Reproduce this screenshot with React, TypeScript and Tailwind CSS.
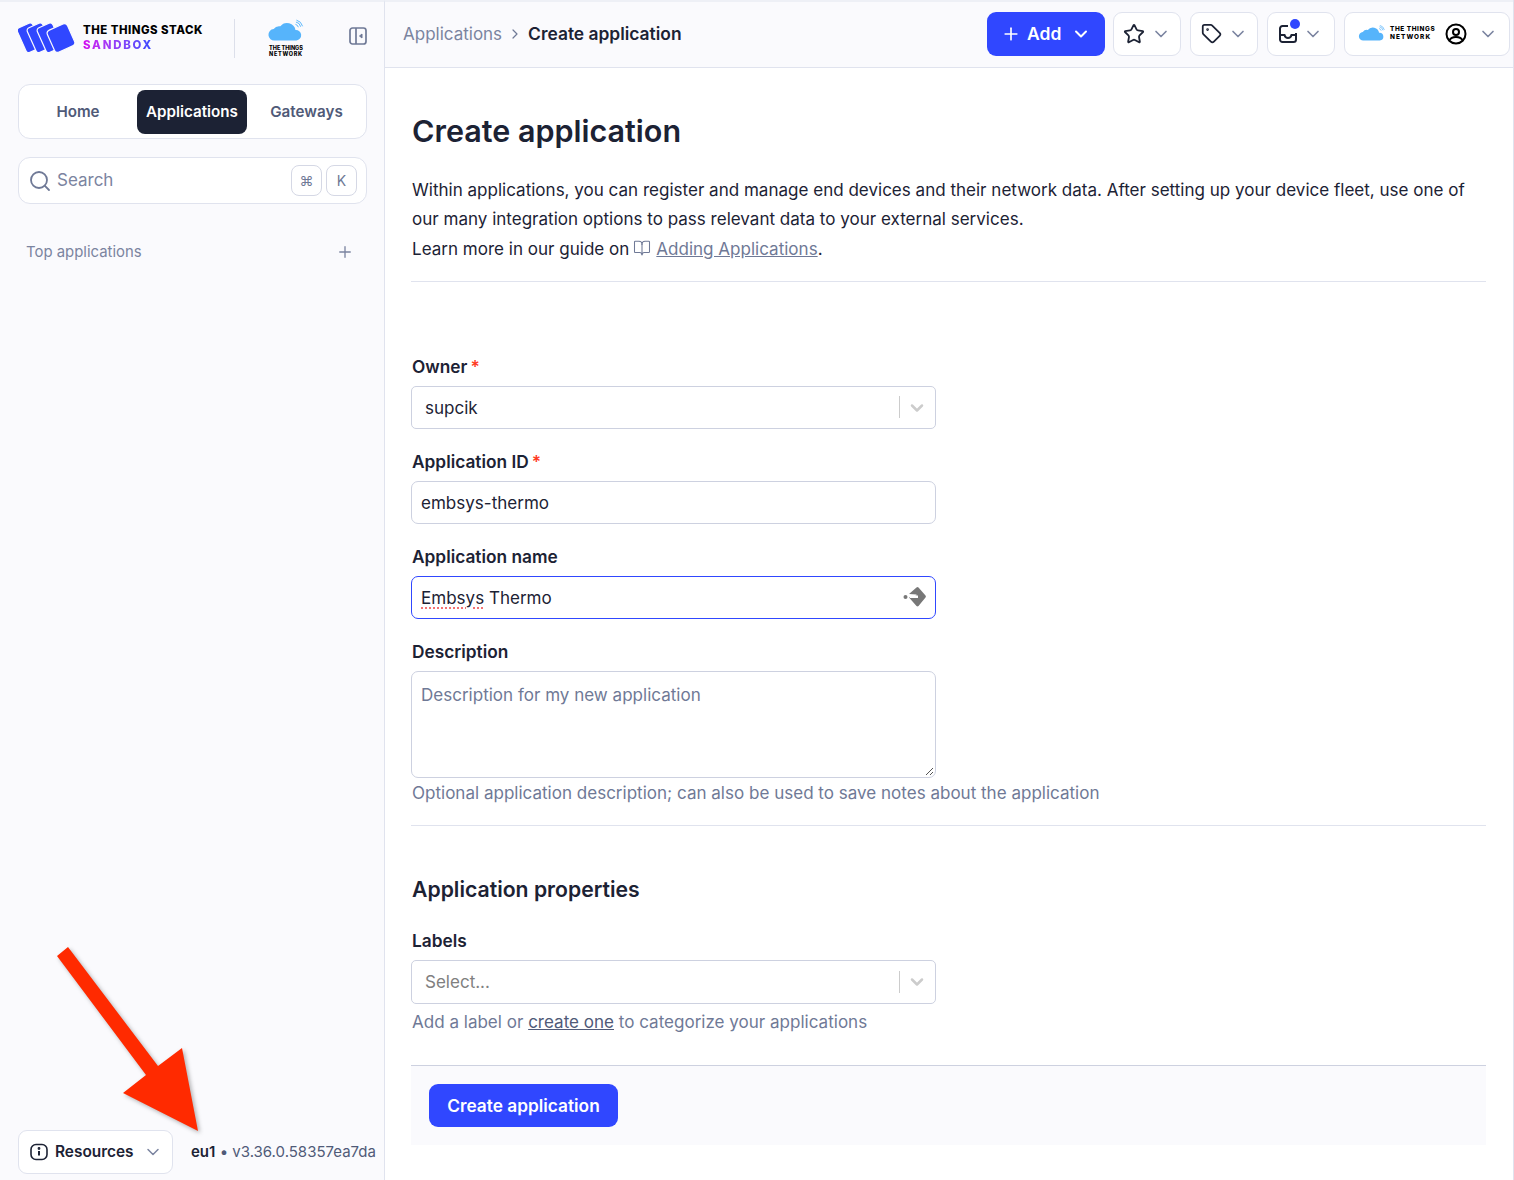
import { ChevronDown, ChevronRight, Plus, Search, Star, Tag, BookOpen } from 'lucide-react';

function StackLogo() {
  return (
    <svg width="58" height="30" viewBox="0 0 58 30">
      <g fill="#3047ff" stroke="#fafafd" strokeWidth="1.2">
        <rect x="3" y="1.500" width="17" height="27" rx="3" transform="rotate(-24 11 15)" />
        <rect x="13" y="1.500" width="17" height="27" rx="3" transform="rotate(-24 21 15)" />
        <rect x="23" y="1.500" width="17" height="27" rx="3" transform="rotate(-24 31 15)" />
        <rect x="32" y="3" width="22" height="24" rx="3.500" transform="rotate(-24 43 15)" />
      </g>
    </svg>
  );
}

function Cloud({ width = 36, height = 24 }: { width?: number; height?: number }) {
  return (
    <svg width={width} height={height} viewBox="0 0 38 24">
      <path d="M7 22a6 6 0 0 1-1-12 7 7 0 0 1 7-3 9 9 0 0 1 16 4 5.500 5.500 0 0 1 1 11z" fill="#56b4fb" />
      <g fill="none" stroke="#56b4fb" strokeWidth="1">
        <path d="M29 5a4 4 0 0 1 3 3" />
        <path d="M29.500 2.500a6.500 6.500 0 0 1 5 5" />
        <path d="M30 0.500a9 9 0 0 1 6.500 6.500" />
      </g>
    </svg>
  );
}

function TtnMark() {
  return (
    <div className="flex flex-col items-center w-[38px]">
      <Cloud />
      <div className="font-extrabold text-[5.500px] leading-[6px] whitespace-nowrap text-center text-black mt-[2px]">
        THE THINGS
        <br />
        <span className="tracking-[0.7px]">NETWORK</span>
      </div>
    </div>
  );
}

function SelectField({ value, placeholder, tall }: { value?: string; placeholder?: string; tall?: boolean }) {
  return (
    <div className={`${tall ? 'h-[44px]' : 'h-[43px]'} w-[525px] bg-white border border-[#cdd1e0] rounded-[5px] flex items-center pl-[13px]`}>
      <span className={value ? 'pt-[2px] text-[#1c2234]' : 'text-[#808080]'}>{value ?? placeholder}</span>
      <div className="ml-auto flex items-center">
        <div className="w-px h-[22px] bg-[#cccccc]" />
        <ChevronDown size={20} strokeWidth={3} className="text-[#cccccc] ml-[7px] mr-[8px] mt-[1px]" />
      </div>
    </div>
  );
}

function Label({ text, required }: { text: string; required?: boolean }) {
  return (
    <div className="h-[19px] flex items-center font-semibold text-[17.300px] text-[#1c2234] pl-[1px] mb-[10px] leading-[19px]">
      {text}
      {required && <span className="text-[#ff3b1f] ml-[3px]">*</span>}
    </div>
  );
}

function IconButton({ children, width }: { children: React.ReactNode; width: string }) {
  return (
    <div className={`h-[44px] ${width} bg-white border border-[#e0e3ee] rounded-[9px] flex items-center justify-center gap-[6px]`}>
      {children}
      <ChevronDown size={20} strokeWidth={2} className="text-[#7b84a0]" />
    </div>
  );
}

export default function App() {
  return (
    <div className="relative h-screen overflow-hidden bg-white flex font-['Inter',sans-serif] text-[17.040px] text-[#1c2234]">
      {/* SIDEBAR */}
      <aside className="w-[385px] shrink-0 bg-[#fafafd] border-r border-[#e0e3ee] border-t-2 border-t-[#eef0f6] flex flex-col pl-[18px] pr-[17px]">
        <div className="h-[82px] shrink-0 flex items-center">
          <div className="flex items-center h-[40px] -mt-[10px] w-full">
            <StackLogo />
            <div className="ml-[7px] font-extrabold text-[11.400px] leading-[15px] tracking-[0.5px] w-[132px]">
              <div className="text-black whitespace-nowrap">THE THINGS STACK</div>
              <div className="bg-gradient-to-r from-[#d400f0] to-[#3047ff] bg-clip-text text-transparent w-fit tracking-[1.800px]">SANDBOX</div>
            </div>
            <div className="w-px h-[39px] bg-[#dcdfea] ml-[19px]" />
            <div className="ml-[32px]"><TtnMark /></div>
            <svg width="18" height="18" viewBox="0 0 18 18" className="ml-auto mt-[-4px]" fill="none" stroke="#6f7996" strokeWidth="1.700">
              <rect x="1" y="1" width="16" height="16" rx="2.500" />
              <path d="M7 1v16" />
              <path d="M13 7l-2.500 2 2.500 2z" fill="#6f7996" strokeWidth="1" />
            </svg>
          </div>
        </div>

        <nav className="h-[55px] shrink-0 bg-white border border-[#e0e3ee] rounded-[12px] flex items-center px-[5px] font-semibold text-[15.200px] text-[#505a78]">
          <div className="w-[113px] text-center pr-[5px] pt-[1px]">Home</div>
          <div className="w-[110px] h-[44px] bg-[#1c2234] text-white rounded-[8px] flex items-center justify-center pt-[1px]">Applications</div>
          <div className="flex-1 text-center pl-[5px] pt-[1px]">Gateways</div>
        </nav>

        <div className="h-[47px] mt-[18px] shrink-0 bg-white border border-[#e0e3ee] rounded-[12px] flex items-center pl-[9px] pr-[9px]">
          <Search size={24} strokeWidth={1.800} className="text-[#6f7996]" />
          <span className="ml-[5px] text-[17px] text-[#7b84a0]">Search</span>
          <div className="ml-auto flex gap-[4px]">
            <div className="w-[31px] h-[31px] border border-[#d5d8e5] rounded-[8px] flex items-center justify-center text-[#6f7996] text-[14px]">⌘</div>
            <div className="w-[31px] h-[31px] border border-[#d5d8e5] rounded-[8px] flex items-center justify-center text-[#6f7996] text-[14px]">K</div>
          </div>
        </div>

        <div className="mt-[37px] pl-[8px] pr-[13px] flex items-center justify-between text-[14.900px] text-[#7b84a0]">
          <span>Top applications</span>
          <Plus size={18} strokeWidth={1.800} />
        </div>

        <div className="mt-auto mb-[6px] flex items-center">
          <div className="w-[155px] shrink-0 h-[44px] bg-white border border-[#e0e3ee] rounded-[9px] flex items-center pl-[11px] font-semibold text-[15.400px] text-[#1c2234]">
            <svg width="18" height="18" viewBox="0 0 18 18" fill="none" stroke="#1c2234" strokeWidth="1.600">
              <rect x="1" y="1.500" width="16" height="15" rx="5" />
              <path d="M9 8v4.500" strokeWidth="2" />
              <circle cx="9" cy="5.500" r="0.600" fill="#1c2234" />
            </svg>
            <span className="ml-[7px]">Resources</span>
            <ChevronDown size={20} strokeWidth={1.800} className="text-[#7b84a0] ml-[9px]" />
          </div>
          <div className="ml-[18px] text-[15px] whitespace-nowrap text-[#505a78]">
            <span className="font-semibold text-[#1c2234]">eu1</span> • v3.36.0.58357ea7da
          </div>
        </div>
      </aside>

      {/* MAIN */}
      <main className="flex-1 min-w-0 flex flex-col border-r border-[#e0e3ee]">
        <header className="h-[68px] shrink-0 bg-[#fafafd] border-b border-[#e0e3ee] border-t-2 border-t-[#eef0f6] flex items-center pl-[18px] pr-[3px] pb-[2px]">
          <span className="text-[#7b84a0] text-[17px] pt-[2px]">Applications</span>
          <ChevronRight size={16} strokeWidth={1.800} className="text-[#6f7996] mx-[5px]" />
          <span className="font-semibold text-[17.400px] pt-[2px]">Create application</span>
          <div className="ml-auto flex items-center gap-[9px]">
            <div className="h-[44px] w-[118px] mr-[-1px] bg-[#3047ff] rounded-[9px] text-white font-semibold text-[17.500px] flex items-center pl-[14px]">
              <Plus size={20} strokeWidth={2} />
              <span className="ml-[6px] pt-[2px]">Add</span>
              <ChevronDown size={20} strokeWidth={2.400} className="ml-[10px]" />
            </div>
            <IconButton width="w-[68px]"><Star size={22} strokeWidth={2} className="text-[#1c2234]" /></IconButton>
            <IconButton width="w-[68px]"><Tag size={21} strokeWidth={2} className="text-[#1c2234]" /></IconButton>
            <IconButton width="w-[68px]">
              <div className="relative">
                <svg width="18" height="20" viewBox="0 0 18 20" fill="none" stroke="#1c2234" strokeWidth="2">
                  <path d="M9 2H3.500A2.500 2.500 0 0 0 1 4.500v11A2.500 2.500 0 0 0 3.500 18h11a2.500 2.500 0 0 0 2.500-2.500V9" />
                  <path d="M1 11h4.500c.5 2 1.700 3 3.500 3s3-1 3.500-3H17" />
                </svg>
                <div className="absolute -top-[5px] right-[-3px] w-[10px] h-[10px] bg-[#3047ff] rounded-full" />
              </div>
            </IconButton>
            <div className="h-[44px] w-[166px] bg-white border border-[#e0e3ee] rounded-[9px] flex items-center pl-[13px]">
              <Cloud width={28} height={17} />
              <div className="ml-[4px] font-extrabold text-[6.400px] leading-[7.500px] tracking-[0.6px] whitespace-nowrap text-black">
                THE THINGS
                <br />
                <span className="tracking-[1.100px]">NETWORK</span>
              </div>
              <svg width="22" height="22" viewBox="0 0 22 22" fill="none" stroke="#000" strokeWidth="2" className="ml-[10px]">
                <circle cx="11" cy="11" r="9.500" />
                <circle cx="11" cy="9" r="3" />
                <path d="M4.500 17.500c1-2.500 3-3.500 6.500-3.500s5.500 1 6.500 3.500" />
              </svg>
              <ChevronDown size={20} strokeWidth={2} className="text-[#7b84a0] ml-auto mr-[11px]" />
            </div>
          </div>
        </header>

        <div className="pl-[26px] pr-[27px] flex-1 text-[#1c2234]">
          <h1 className="mt-[41px] pl-[1px] font-semibold text-[30.500px] leading-[44px]">Create application</h1>
          <div className="mt-[21.500px] pl-[1px] leading-[29.500px]">
            <p>Within applications, you can register and manage end devices and their network data. After setting up your device fleet, use one of our many integration options to pass relevant data to your external services.</p>
            <p className="flex items-center">
              Learn more in our guide on
              <BookOpen size={18} strokeWidth={1.400} className="text-[#6f7996] ml-[4px] mr-[5px]" />
              <span className="text-[#6f7996] underline">Adding Applications</span>
              <span>.</span>
            </p>
          </div>
          <div className="h-px bg-[#e0e3ee] mt-[17.500px]" />

          {/* FORMULAIRE */}
          <div className="mt-[75px]">
            <Label text="Owner" required />
            <SelectField value="supcik" />
          </div>
          <div className="mt-[23px]">
            <Label text="Application ID" required />
            <div className="h-[43px] w-[525px] bg-white border border-[#cdd1e0] rounded-[7px] flex items-center pl-[9px] pt-[2px]">embsys-thermo</div>
          </div>
          <div className="mt-[23px]">
            <Label text="Application name" />
            <div className="h-[43px] w-[525px] bg-white border border-[#3047ff] rounded-[7px] flex items-center pl-[9px] pr-[8px]">
              <span className="pt-[2px]"><span className="underline decoration-dotted decoration-[#ef4444] underline-offset-[3px]">Embsys</span> Thermo</span>
              <svg width="24" height="24" viewBox="0 0 24 24" className="ml-auto" fill="#777777">
                <circle cx="2.500" cy="12" r="2" />
                <path d="M13.500 2.500a1.500 1.500 0 0 1 2 0l7 8a1.500 1.500 0 0 1 0 2l-7 8.500a1.500 1.500 0 0 1-2 0l-7.500-8.500 7.500-2v-1l-7.500-.5z" />
                <rect x="7" y="10.500" width="8" height="2.500" fill="#ffffff" />
              </svg>
            </div>
          </div>
          <div className="mt-[23px]">
            <Label text="Description" />
            <div className="relative h-[107px] w-[525px] bg-white border border-[#cdd1e0] rounded-[7px] pl-[9px] pt-[10px] leading-[26px] text-[#6f7996]">
              Description for my new application
              <svg width="10" height="10" viewBox="0 0 10 10" className="absolute right-[1px] bottom-[1px]" stroke="#555" strokeWidth="1">
                <path d="M2 9l7-7M6 9l3-3" />
              </svg>
            </div>
            <div className="mt-[3px] pl-[1px] h-[24px] leading-[24px] text-[#6f7996]">Optional application description; can also be used to save notes about the application</div>
          </div>
          <div className="h-px bg-[#e0e3ee] mt-[20px]" />

          <h2 className="mt-[48px] pl-[1px] font-semibold text-[21.200px] leading-[30px]">Application properties</h2>
          <div className="mt-[27px]">
            <Label text="Labels" />
            <SelectField placeholder="Select..." tall />
            <div className="mt-[6px] pl-[1px] h-[24px] leading-[24px] text-[#6f7996]">
              Add a label or <span className="underline text-[#505a78]">create one</span> to categorize your applications
            </div>
          </div>

          <div className="mt-[31px] h-[80px] bg-[#fafafd] border-t border-[#cdd1e0] flex items-center pl-[18px]">
            <div className="h-[43px] w-[189px] justify-center bg-[#3047ff] rounded-[9px] text-white font-semibold text-[17.300px] pt-[2px] flex items-center">Create application</div>
          </div>
        </div>
      </main>

      {/* Annotation arrow */}
      <svg className="absolute left-0 top-0 pointer-events-none drop-shadow-[2px_2px_2px_rgba(0,0,0,0.3)]" width="220" height="1180" viewBox="0 0 220 1180">
        <path d="M57 956L68 947L158 1066L182 1048L198 1131L123 1093L146 1075Z" fill="#ff2a00" />
      </svg>
    </div>
  );
}
